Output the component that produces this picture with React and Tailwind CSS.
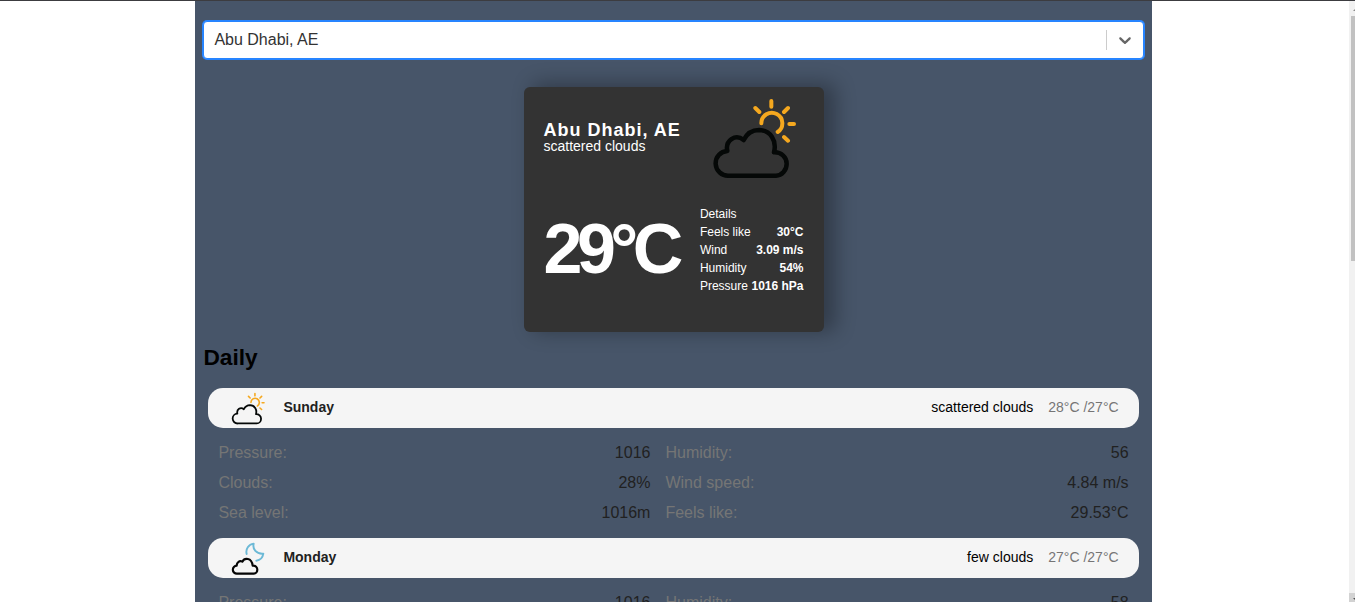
const CLOUDY_DAY = 'day';
const CLOUDY_NIGHT = 'night';

const days = [
  {
    name: 'Sunday', icon: CLOUDY_DAY, description: 'scattered clouds', range: '28°C /27°C',
    details: [['Pressure:', '1016'], ['Humidity:', '56'], ['Clouds:', '28%'], ['Wind speed:', '4.84 m/s'], ['Sea level:', '1016m'], ['Feels like:', '29.53°C']],
  },
  {
    name: 'Monday', icon: CLOUDY_NIGHT, description: 'few clouds', range: '27°C /27°C',
    details: [['Pressure:', '1016'], ['Humidity:', '58'], ['Clouds:', '14%'], ['Wind speed:', '4.84 m/s'], ['Sea level:', '1016m'], ['Feels like:', '29.53°C']],
  },
];

const readings = [['Feels like', '30°C'], ['Wind', '3.09 m/s'], ['Humidity', '54%'], ['Pressure', '1016 hPa']];

function DayIcon({ className }) {
  return (
    <svg className={className} viewBox="12 -9 300 300" fill="none" strokeLinecap="round">
      <g stroke="#f5a81f" strokeWidth="12">
        <path d="M184 100A31.500 31.500 0 1 1 233 126" />
        <path d="M214 33V50M264 54L252 66M268 102H282M252 141L264 152M166 54L178 66" />
      </g>
      <path
        d="M86 257A37 37 0 0 1 82 183C75 152 106 130 131 150C141 130 158 120 177 120C212 121 231 152 222 187C243 186 260 201 260 221C260 240 246 257 228 257Z"
        stroke="#050807" strokeWidth="13.500" strokeLinejoin="round"
      />
    </svg>
  );
}

function NightIcon({ className }) {
  return (
    <svg className={className} viewBox="84 24 120 120" fill="none" strokeLinecap="round" strokeLinejoin="round">
      <path d="M140 72C136 57 146 43 161 41C157 57 169 73 190 71C188 83 179 91 169 92" stroke="#6cb9d6" strokeWidth="5.800" />
      <path
        d="M111 131A12 12 0 0 1 110 107C110 96 119 91 127 95C133 83 155 82 158 107C167 106 172 112 172 119C172 126 167 131 161 131Z"
        stroke="#050505" strokeWidth="6.400"
      />
    </svg>
  );
}

function Search() {
  return (
    <div className="flex h-[38px] items-center rounded border border-[#2684ff] bg-white shadow-[0_0_0_1px_#2684ff]">
      <div className="flex-1 pl-[10px] text-base leading-5 text-[#333]">Abu Dhabi, AE</div>
      <span className="h-5 w-px bg-[#ccc]" />
      <div className="p-2">
        <svg className="h-5 w-5 fill-[#666]" viewBox="0 0 20 20">
          <path d="M4.516 7.548c0.436-0.446 1.043-0.481 1.576 0l3.908 3.747 3.908-3.747c0.533-0.481 1.141-0.446 1.574 0 0.436 0.445 0.408 1.197 0 1.615-0.406 0.418-4.695 4.502-4.695 4.502-0.217 0.223-0.502 0.335-0.787 0.335s-0.570-0.112-0.789-0.335c0 0-4.287-4.084-4.695-4.502s-0.436-1.170 0-1.615z" />
        </svg>
      </div>
    </div>
  );
}

function CurrentWeather() {
  return (
    <section className="mx-auto mt-7 w-[300px] rounded-md bg-[#333] px-5 pb-5 text-white shadow-[10px_-2px_20px_2px_rgba(0,0,0,0.3)]">
      <div className="flex items-center justify-between">
        <div>
          <p className="text-lg leading-none font-semibold tracking-[1px]">Abu Dhabi, AE</p>
          <p className="text-sm leading-none">scattered clouds</p>
        </div>
        <DayIcon className="h-[100px] w-[100px]" />
      </div>
      <div className="flex items-center justify-between">
        <p className="my-[10px] text-[70px] leading-[105px] font-semibold tracking-[-5.5px]">29°C</p>
        <div className="w-full pl-[22px] text-xs leading-[18px]">
          <p>Details</p>
          {readings.map(([label, value]) => (
            <div key={label} className="flex justify-between whitespace-nowrap">
              <span>{label}</span>
              <span className="font-semibold">{value}</span>
            </div>
          ))}
        </div>
      </div>
    </section>
  );
}

function Day({ day }) {
  const Icon = day.icon === CLOUDY_DAY ? DayIcon : NightIcon;
  return (
    <article>
      <div className="m-[5px] flex h-10 items-center rounded-[15px] bg-[#f5f5f5] px-5 text-sm">
        <Icon className="h-10 w-10" />
        <h3 className="ml-[15px] flex-1 pb-0.5 font-semibold text-[#212121]">{day.name}</h3>
        <span className="mr-[15px] pb-0.5 text-black">{day.description}</span>
        <span className="pb-0.5 text-[#757575]">{day.range}</span>
      </div>
      <div className="grid grid-cols-[auto_auto] gap-x-[15px] px-[15px] py-[5px]">
        {day.details.map(([label, value]) => (
          <div key={label} className="flex h-[30px] items-center justify-between">
            <span className="text-[#757575]">{label}</span>
            <span className="text-[#212121]">{value}</span>
          </div>
        ))}
      </div>
    </article>
  );
}

function Scrollbar() {
  return (
    <div className="flex w-1.5 flex-col overflow-hidden bg-[#f1f1f1]">
      <svg className="h-[15px] w-1.5" viewBox="0 0 6 15"><path d="M4 10L8 6V10Z" fill="#8a8a8a" /></svg>
      <div className="ml-0.5 h-[245px] bg-[#c1c1c1]" />
      <div className="flex-1" />
      <svg className="h-[9px] w-1.5 bg-[#d2d2d2]" viewBox="0 0 6 9"><path d="M4 5H6V7Z" fill="#505050" /></svg>
    </div>
  );
}

export default function App() {
  return (
    <div className="flex h-[602px] w-[1355px] overflow-hidden border-t border-[#3c3c40] bg-white font-['Liberation_Sans',Arial,sans-serif]">
      <div className="flex flex-1 justify-center overflow-hidden pr-0.5">
        <main className="w-[957px] bg-[#475569] px-[8.4px] pt-5">
          <Search />
          <CurrentWeather />
          <h2 className="mt-2 mb-[13px] text-[22.7px] leading-[35px] font-bold text-black">Daily</h2>
          {days.map((day) => <Day key={day.name} day={day} />)}
        </main>
      </div>
      <Scrollbar />
    </div>
  );
}
